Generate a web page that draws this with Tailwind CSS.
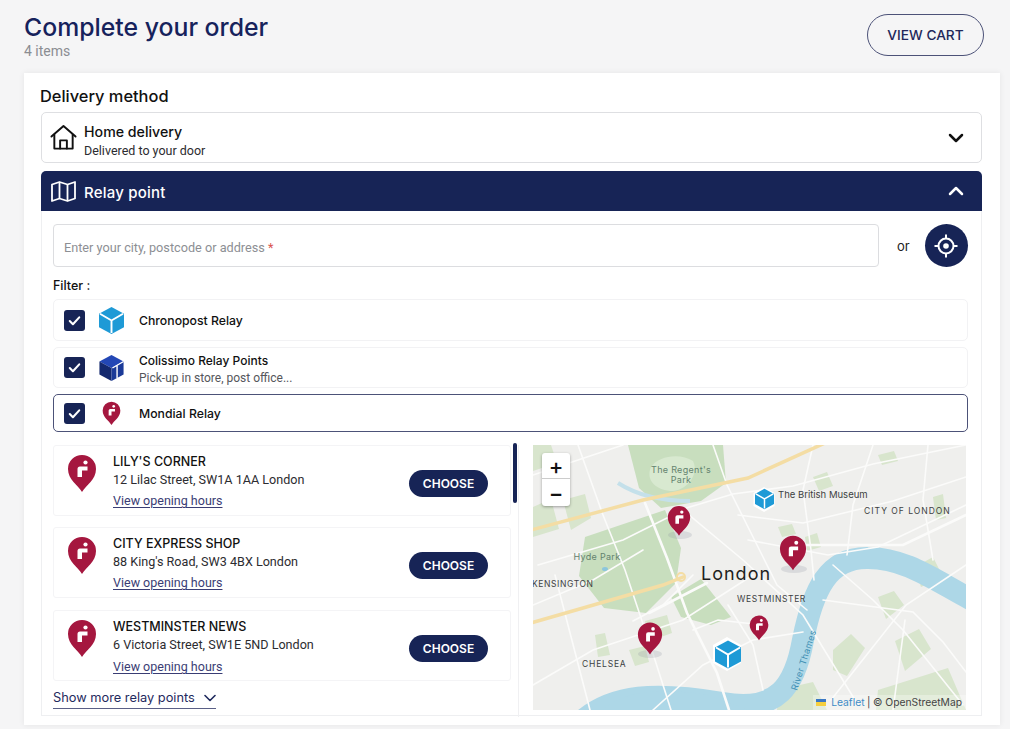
<!DOCTYPE html>
<html lang="en">
<head>
<meta charset="utf-8">
<title>Complete your order</title>
<script src="https://cdn.jsdelivr.net/npm/@tailwindcss/browser@4"></script>
</head>
<body class="bg-[#f5f5f6] font-['Inter',sans-serif] text-[#111] overflow-hidden h-[729px]">

<!-- shared icons -->
<svg class="absolute w-0 h-0">
    <defs>
        <symbol id="pin" viewBox="0 0 30 38">
            <path fill="#a5173f" d="M15 38C11 31 1 26 1 15a14 14 0 1 1 28 0c0 11-10 16-14 23z"/>
            <circle cx="18.5" cy="8.5" r="2.1" fill="#fff"/>
            <path fill="#fff" d="M10.5 23v-8q0-2.500 2.500-2.500h7.500v4h-5.500v6.500z"/>
        </symbol>
        <symbol id="cube-blue" viewBox="0 0 26 28">
            <path fill="#1e9ad6" d="M13 0l13 7v14l-13 7-13-7V7z"/>
            <path fill="none" stroke="#fff" stroke-width="2" d="M1 7l12 7 12-7M13 14v13"/>
        </symbol>
        <symbol id="cube-dark" viewBox="0 0 26 28">
            <path fill="#2347b5" d="M13 0l13 7-13 7L0 7z"/>
            <path fill="#14296f" d="M0 7l13 7v14L0 21z"/>
            <path fill="#1b3a98" d="M13 14l13-7v14l-13 7z"/>
            <path fill="none" stroke="#fff" stroke-width="1.500" d="M14 14l12-7M19 11v14"/>
        </symbol>
        <symbol id="check" viewBox="0 0 20 20">
            <path fill="none" stroke="#fff" stroke-width="2" stroke-linecap="round" stroke-linejoin="round" d="M5.500 10.500l3 3 6-6.500"/>
        </symbol>
    </defs>
</svg>

<!-- header -->
<div class="flex justify-between pl-[24px] pr-[26px] pt-[14px]">
    <div>
        <h1 class="text-[24.800px] leading-[26px] font-medium text-[#16225c]">Complete your order</h1>
        <div class="font-['Roboto',sans-serif] text-[14px] leading-[18px] mt-[2px] text-[#8b8d92]">4 items</div>
    </div>
    <button class="w-[117px] h-[42px] rounded-full border border-[#4c5278] text-[13.700px] font-medium text-[#23285a]">VIEW CART</button>
</div>

<!-- card -->
<div class="mt-[13px] ml-[24px] w-[976px] h-[652px] bg-white shadow-[0_0_6px_rgba(0,0,0,0.07)] pl-[17px] pr-[18px] pt-[11px]">
    <h2 class="-ml-[1px] text-[16.400px] leading-[24px] font-medium">Delivery method</h2>

    <!-- home delivery -->
    <div class="mt-[4px] h-[51px] border border-[#dedfe2] rounded-[5px] flex items-center pl-[8px] pr-[17px]">
        <svg class="w-[27px] h-[27px] shrink-0" viewBox="0 0 28 28" fill="none" stroke="#111" stroke-width="2" stroke-linejoin="round" stroke-linecap="round">
            <path d="M1.500 13L14 2l12.500 11"/>
            <path d="M4.500 11v14.500h19V11"/>
            <path d="M10.500 25.500V17h7v8.500"/>
        </svg>
        <div class="ml-[7px] pt-[5px]">
            <div class="text-[14.200px] leading-[20px] font-medium">Home delivery</div>
            <div class="font-['Roboto',sans-serif] text-[12.500px] leading-[16px] mt-[1px] text-[#2c2c30]">Delivered to your door</div>
        </div>
        <svg class="ml-auto w-[16px] h-[10px]" viewBox="0 0 16 10" fill="none" stroke="#111" stroke-width="2.500" stroke-linecap="round" stroke-linejoin="round"><path d="M2 2l6 6 6-6"/></svg>
    </div>

    <!-- relay point -->
    <div class="mt-[8px] h-[40px] bg-[#172456] rounded-t-[5px] flex items-center pl-[10px] pr-[18px] text-white">
        <svg class="w-[25px] h-[21px] shrink-0" viewBox="0 0 25 21" fill="none" stroke="#fff" stroke-width="1.800" stroke-linejoin="round">
            <path d="M1 3.500L8.500 1l8 2.500L24 1v16.500L16.500 20l-8-2.500L1 20z"/>
            <path d="M8.500 1v16.500M16.500 3.500V20"/>
        </svg>
        <span class="ml-[8px] pt-[4px] text-[15px] font-medium tracking-[0.2px]">Relay point</span>
        <svg class="ml-auto w-[16px] h-[10px]" viewBox="0 0 16 10" fill="none" stroke="#fff" stroke-width="2.500" stroke-linecap="round" stroke-linejoin="round"><path d="M2 8l6-6 6 6"/></svg>
    </div>

    <div class="h-[505px] border-x border-b border-[#eeeff1] px-[11px] pt-[13px]">
        <!-- search -->
        <div class="flex items-center">
            <div class="w-[826px] h-[43px] border border-[#dcdde0] rounded-[4px] flex items-center pl-[10px] pt-[4px] font-['Roboto',sans-serif] text-[12.700px] text-[#8d8f94]">
                <span>Enter your city, postcode or address <span class="text-[#d9534f]">*</span></span>
            </div>
            <span class="ml-[18px] pt-[3px] text-[13px] text-[#222]">or</span>
            <button class="ml-[15px] w-[43px] h-[43px] rounded-full bg-[#172456] flex items-center justify-center">
                <svg class="w-[26px] h-[26px]" viewBox="0 0 26 26" fill="none" stroke="#fff" stroke-width="2">
                    <circle cx="13" cy="13" r="7.500"/>
                    <circle cx="13" cy="13" r="2.800" fill="#fff" stroke="none"/>
                    <path d="M13 1.500v4M13 20.500v4M1.500 13h4M20.500 13h4"/>
                </svg>
            </button>
        </div>

        <!-- filters -->
        <div class="mt-[9px] text-[12.500px] leading-[20px] font-medium">Filter :</div>
        <div class="mt-[3px] h-[42px] w-[915px] border border-[#f2f2f4] rounded-[5px] flex items-center pl-[10px]">
            <span class="w-[21px] h-[21px] rounded-[3px] bg-[#172456] shrink-0"><svg class="w-[21px] h-[21px]"><use href="#check"/></svg></span>
            <svg class="ml-[14px] w-[25px] h-[27px] shrink-0"><use href="#cube-blue"/></svg>
            <span class="ml-[15px] pt-[2px] text-[12.250px] font-medium">Chronopost Relay</span>
        </div>
        <div class="mt-[6px] h-[41px] w-[915px] border border-[#f2f2f4] rounded-[5px] flex items-center pl-[10px]">
            <span class="w-[21px] h-[21px] rounded-[3px] bg-[#172456] shrink-0"><svg class="w-[21px] h-[21px]"><use href="#check"/></svg></span>
            <svg class="ml-[14px] w-[25px] h-[26px] shrink-0"><use href="#cube-dark"/></svg>
            <div class="ml-[15px] pt-[3px]">
                <div class="text-[12px] leading-[16px] font-medium">Colissimo Relay Points</div>
                <div class="font-['Roboto',sans-serif] text-[12px] leading-[16px] mt-[1px] text-[#55565b]">Pick-up in store, post office...</div>
            </div>
        </div>
        <div class="mt-[6px] h-[38px] w-[915px] border border-[#4c5278] rounded-[5px] flex items-center pl-[10px]">
            <span class="w-[21px] h-[21px] rounded-[3px] bg-[#172456] shrink-0"><svg class="w-[21px] h-[21px]"><use href="#check"/></svg></span>
            <svg class="ml-[17px] w-[19px] h-[24px] shrink-0"><use href="#pin"/></svg>
            <span class="ml-[18px] pt-[2px] text-[12.250px] font-medium">Mondial Relay</span>
        </div>

        <!-- relay list + map -->
        <div class="mt-[13px] flex">
            <div class="relative w-[466px] h-[272px] border-r border-[#f0f0f2]">
                <div class="absolute left-[460px] top-[-2px] w-[4px] h-[60px] rounded-full bg-[#172456]"></div>

                <div class="w-[458px] h-[71px] border border-[#f4f4f6] rounded-[3px] flex pl-[13px] pr-[22px]">
                    <svg class="mt-[8px] w-[30px] h-[38px] shrink-0"><use href="#pin"/></svg>
                    <div class="ml-[16px] pt-[7px]">
                        <div class="text-[12.500px] leading-[18px] font-medium">LILY'S CORNER</div>
                        <div class="font-['Roboto',sans-serif] text-[12.600px] leading-[18px] text-[#2c2c30]">12 Lilac Street, SW1A 1AA London</div>
                        <a class="block mt-[3px] font-['Roboto',sans-serif] text-[12.500px] leading-[18px] text-[#3a3d74] underline underline-offset-2">View opening hours</a>
                    </div>
                    <button class="ml-auto mt-[24px] w-[79px] h-[27px] rounded-full bg-[#172456] text-white text-[12px] font-semibold">CHOOSE</button>
                </div>

                <div class="mt-[11px] w-[458px] h-[71px] border border-[#f4f4f6] rounded-[3px] flex pl-[13px] pr-[22px]">
                    <svg class="mt-[8px] w-[30px] h-[38px] shrink-0"><use href="#pin"/></svg>
                    <div class="ml-[16px] pt-[7px]">
                        <div class="text-[12.500px] leading-[18px] font-medium">CITY EXPRESS SHOP</div>
                        <div class="font-['Roboto',sans-serif] text-[12.600px] leading-[18px] text-[#2c2c30]">88 King's Road, SW3 4BX London</div>
                        <a class="block mt-[3px] font-['Roboto',sans-serif] text-[12.500px] leading-[18px] text-[#3a3d74] underline underline-offset-2">View opening hours</a>
                    </div>
                    <button class="ml-auto mt-[24px] w-[79px] h-[27px] rounded-full bg-[#172456] text-white text-[12px] font-semibold">CHOOSE</button>
                </div>

                <div class="mt-[12px] w-[458px] h-[71px] border border-[#f4f4f6] rounded-[3px] flex pl-[13px] pr-[22px]">
                    <svg class="mt-[8px] w-[30px] h-[38px] shrink-0"><use href="#pin"/></svg>
                    <div class="ml-[16px] pt-[7px]">
                        <div class="text-[12.500px] leading-[18px] font-medium">WESTMINSTER NEWS</div>
                        <div class="font-['Roboto',sans-serif] text-[12.600px] leading-[18px] text-[#2c2c30]">6 Victoria Street, SW1E 5ND London</div>
                        <a class="block mt-[4px] font-['Roboto',sans-serif] text-[12.500px] leading-[18px] text-[#3a3d74] underline underline-offset-2">View opening hours</a>
                    </div>
                    <button class="ml-auto mt-[24px] w-[79px] h-[27px] rounded-full bg-[#172456] text-white text-[12px] font-semibold">CHOOSE</button>
                </div>

                <a class="mt-[7px] inline-flex items-center text-[12.800px] leading-[20px] text-[#1f2a5e] border-b border-[#5a5f86]">
                    Show more relay points
                    <svg class="ml-[9px] w-[12px] h-[8px]" viewBox="0 0 12 8" fill="none" stroke="#1f2a5e" stroke-width="1.600" stroke-linecap="round" stroke-linejoin="round"><path d="M1 1.500l5 5 5-5"/></svg>
                </a>
            </div>

            <!-- map -->
            <div class="relative ml-[14px] w-[433px] h-[265px] overflow-hidden bg-[#efefed]">
                <!-- base tiles -->
                <svg class="absolute inset-0 w-[433px] h-[265px] blur-[0.6px]" viewBox="0 0 433 265">
                    <g fill="#c8debe">
                        <path d="M95 0h95l3 38-25 18-40 7-22-20z"/>
                        <path d="M52 92l80-27 16 38-5 35-30 30-42-5-25-32z"/>
                        <path d="M138 152l30-18 30 38-20 8-30-8z"/>
                    </g>
                    <g fill="#d8e5cd">
                        <path d="M0 62l18-8 8 30-26 8z"/>
                        <path d="M30 55l22-6 6 24-20 12z"/>
                        <path d="M0 0h18l6 18-24 8z"/>
                        <path d="M62 190l10-2 5 22-12 2z"/>
                        <path d="M112 176l22-6 5 18-22 8z"/>
                        <path d="M96 205l16-4 4 16-14 4z"/>
                        <path d="M300 205l18-16 14 14-18 28-14-6z"/>
                        <path d="M362 196l24-12 12 20-26 22z"/>
                        <path d="M345 152l16-6 10 14-18 14z"/>
                        <path d="M382 122l18-10 10 20-22 10z"/>
                        <path d="M245 245l35-8 14 28h-50z"/>
                        <path d="M345 245l70-22 18 42h-90z"/>
                        <path d="M280 32l14-5 6 14-14 5z"/>
                        <path d="M345 10l16-4 4 10-16 4z"/>
                        <path d="M272 92l12-4 4 14-14 4z"/>
                        <path d="M245 82l14-3 4 10-14 3z"/>
                        <path d="M400 52l10-3 3 24-10 2z"/>
                    </g>
                    <!-- water -->
                    <g fill="none" stroke="#add7e7" stroke-linecap="round">
                        <path stroke-width="22" d="M40 285C75 245 130 248 190 258 245 268 262 240 270 195 280 145 295 112 335 113 375 113 405 138 445 158"/>
                    </g>
                    <path fill="#add7e7" d="M70 265c20-20 60-22 105-15l40 15z"/>
                    <ellipse cx="72" cy="124" rx="3" ry="2" fill="#8cc6dc"/>
                    <path fill="none" stroke="#c4e0ea" stroke-width="4" d="M85 38q28 18 72 18"/>
                    <path fill="#d8e9d0" d="M118 22c8-12 30-14 42-6 6 12-4 28-20 30-16 0-28-10-22-24z"/>
                    <!-- minor roads -->
                    <g fill="none" stroke="#fbfbfa" stroke-width="1.600" stroke-linecap="round">
                        <path d="M0 30L60 10 90 0"/>
                        <path d="M45 0l25 70 22 55 30 90 16 50"/>
                        <path d="M5 120L90 95l60-30 60 50 60 55 55 90"/>
                        <path d="M0 160l60-25 50-30"/>
                        <path d="M22 130l35 135"/>
                        <path d="M0 240l60-35 90-30 70-45"/>
                        <path d="M150 64l50-15 60-8 80-22 93-19"/>
                        <path d="M205 70l65 8 90-22 73-24"/>
                        <path d="M180 0l14 40 20 40 30 60 30 25"/>
                        <path d="M280 0l-10 45 8 60 3 30"/>
                        <path d="M340 0l-20 60-6 50"/>
                        <path d="M395 0l-5 55 10 60"/>
                        <path d="M215 95l80 15 50-8 88-42"/>
                        <path d="M120 265l50-45 50-25 50-8"/>
                        <path d="M160 130l-30 30-30 16"/>
                        <path d="M290 155l90 12 30 30 23 30"/>
                        <path d="M433 120l-60 40-75 95"/>
                        <path d="M300 120l40 35 30 30 60 75"/>
                        <path d="M372 175l-12 90"/>
                        <path d="M230 180l-45-5-25 10"/>
                        <path d="M195 160l25 40 10 45"/>
                    </g>
                    <g fill="none" stroke="#fbfbfa" stroke-width="2.600" stroke-linecap="round">
                        <path d="M112 58l22 55 20 55 30 60 12 37"/>
                        <path d="M270 100l100 0 63-30"/>
                        <path d="M116 168l58-30"/>
                    </g>
                    <!-- motorways -->
                    <g fill="none" stroke="#f4dda4" stroke-width="3.500" stroke-linecap="round">
                        <path d="M-2 85L110 55 215 33 292-2"/>
                        <path d="M-2 178L130 140 150 132"/>
                    </g>
                    <circle cx="148" cy="132" r="4" fill="none" stroke="#f4dda4" stroke-width="2"/>
                    <!-- marker shadows -->
                    <g fill="#8c93a0" opacity="0.22">
                        <ellipse cx="147" cy="90" rx="12" ry="4"/>
                        <ellipse cx="261" cy="124" rx="13" ry="4"/>
                        <ellipse cx="117" cy="209" rx="12" ry="4"/>
                    </g>
                </svg>

                <!-- labels and markers -->
                <svg class="absolute inset-0 w-[433px] h-[265px]" viewBox="0 0 433 265">
                    <g fill="#64836f" font-size="9" text-anchor="middle" letter-spacing="0.3">
                        <text x="148" y="28">The Regent's</text>
                        <text x="148" y="38">Park</text>
                        <text x="64" y="115">Hyde Park</text>
                    </g>
                    <g fill="#3d3f42">
                        <text x="245" y="53" font-size="9.500">The British Museum</text>
                        <text x="331" y="69" font-size="8.500" letter-spacing="1">CITY OF LONDON</text>
                        <text x="168" y="135" font-size="18" letter-spacing="1" fill="#1e1f21">London</text>
                        <text x="204" y="157" font-size="8.500" letter-spacing="0.6">WESTMINSTER</text>
                        <text x="-1" y="142" font-size="8.500" letter-spacing="0.6">KENSINGTON</text>
                        <text x="49" y="222" font-size="8.500" letter-spacing="0.8">CHELSEA</text>
                    </g>
                    <text transform="translate(264 246) rotate(-72)" fill="#3f8fb3" font-size="9" letter-spacing="0.4">River Thames</text>
                    <use href="#pin" x="134" y="58" width="24" height="35"/>
                    <use href="#pin" x="246" y="88" width="28" height="39"/>
                    <use href="#pin" x="104" y="174" width="26" height="38"/>
                    <use href="#pin" x="216" y="168" width="20" height="29"/>
                    <path fill="#fff" d="M231 42l10.500 6v13l-10.500 6-10.500-6V48zM194 192l14 8v18l-14 8-14-8v-18z"/>
                    <use href="#cube-blue" x="222" y="43" width="19" height="22"/>
                    <use href="#cube-blue" x="182" y="193" width="26" height="33"/>
                </svg>

                <!-- zoom control -->
                <div class="absolute left-[9px] top-[8px] w-[28px] h-[53px] bg-white rounded-[3px] shadow-[0_1px_3px_rgba(0,0,0,0.35)] flex flex-col">
                    <div class="h-[26px] border-b border-[#ccc] flex items-center justify-center text-[22px] leading-none font-medium text-[#111]">+</div>
                    <div class="h-[27px] flex items-center justify-center text-[22px] leading-none font-medium text-[#111]">−</div>
                </div>

                <!-- attribution -->
                <div class="absolute right-0 bottom-0 h-[15px] pl-[3px] pr-[4px] flex items-center bg-white/30 text-[10.300px] text-[#444]">
                    <span class="w-[10px] h-[7px] flex flex-col mr-[5px]"><span class="h-[3px] bg-[#3b78c4]"></span><span class="h-[4px] bg-[#f5cf3f]"></span></span>
                    <span class="text-[#3f8cc6]">Leaflet</span>
                    <span class="mx-[2.500px]">|</span>
                    <span>© OpenStreetMap</span>
                </div>
            </div>
        </div>
    </div>
</div>

</body>
</html>
